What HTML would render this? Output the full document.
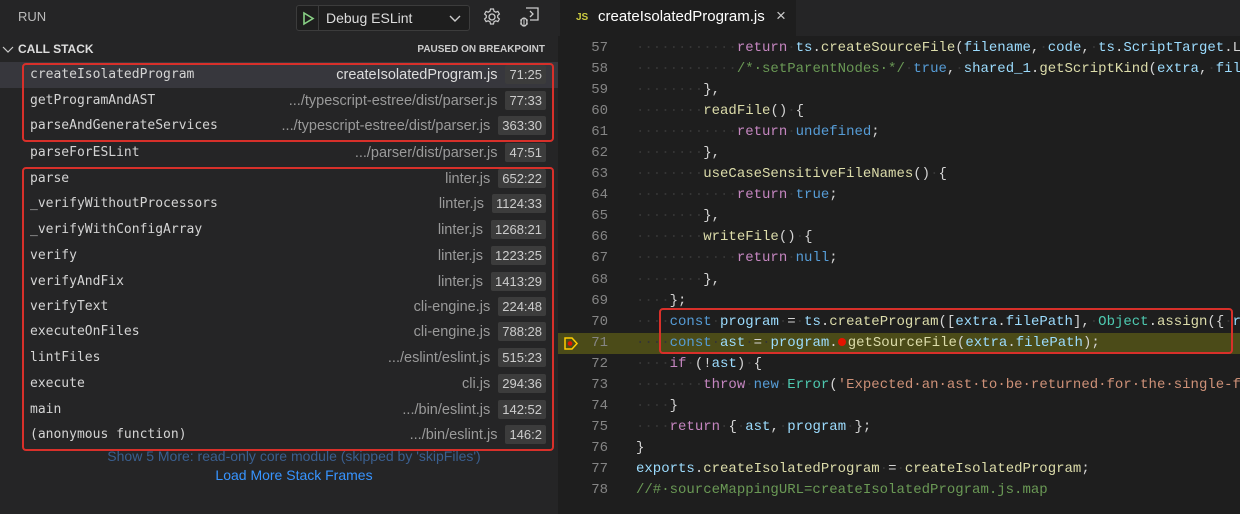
<!DOCTYPE html>
<html><head><meta charset="utf-8"><style>
*{margin:0;padding:0;box-sizing:border-box}
body{width:1240px;height:514px;overflow:hidden;background:#1e1e1e;font-family:"Liberation Sans",sans-serif;position:relative}
#left{position:absolute;left:0;top:0;width:558px;height:514px;background:#252526}
.run{position:absolute;left:18px;top:9px;color:#bbb;font-size:13px}
.dbg{position:absolute;left:296px;top:5px;width:174px;height:26px;border:1px solid #3c3c3c;border-radius:3px;background:#1e1e1e}
.dbg .sep{position:absolute;left:21px;top:0;width:1px;height:24px;background:#3c3c3c}
.dbg .t{position:absolute;left:29px;top:4px;color:#ddd;font-size:14px}
.cs{position:absolute;left:18px;top:42px;color:#ddd;font-size:12px;font-weight:bold}
.pb{position:absolute;right:13px;top:44px;color:#ccc;font-size:10px;font-weight:bold}
.row{position:absolute;left:0;width:558px;height:25.6px}
.row.sel{background:#37373d}
.row .fn{position:absolute;left:30px;top:5px;font-family:"DejaVu Sans Mono","Liberation Mono",monospace;font-size:13px;color:#d4d4d4}
.row .r{position:absolute;right:12px;top:3px;display:flex;align-items:center;gap:8px}
.row .file{font-size:14.5px;color:#9a9a9a}
.row .ln{background:#3c3c3c;color:#ccc;font-size:13px;padding:2px 4px;border-radius:2px}
.sel .file{color:#ddd}
.box{position:absolute;border:2px solid #d8302a;border-radius:4px}
.more{position:absolute;left:0;width:588px;text-align:center;font-size:14px}
#tabs{position:absolute;left:558px;top:0;width:682px;height:36px;background:#252526}
.tab{position:absolute;left:2px;top:0;width:236px;height:36px;background:#1e1e1e;color:#fff;font-size:15px}
.code{position:absolute;left:558px;top:38px;width:682px;font-family:"Liberation Mono",monospace;font-size:14px}
.l{height:21.05px;line-height:21px;white-space:pre;position:relative}
.n{display:inline-block;width:50px;text-align:right;color:#858585;margin-right:28px}
.d{color:#353535}.k{color:#c586c0}.b{color:#569cd6}.f{color:#dcdcaa}.v{color:#9cdcfe}.s{color:#ce9178}.c{color:#6a9955}.g{color:#4ec9b0}.p{color:#d4d4d4}
.hl{background:#4b4b18}
</style></head><body>
<div id="left">
<div class="run">RUN</div>
<div class="dbg"><svg style="position:absolute;left:4px;top:5px" width="14" height="15"><path d="M3 2 L12 7.5 L3 13 Z" fill="none" stroke="#89d185" stroke-width="1.6"/></svg><div class="sep"></div><div class="t">Debug ESLint</div><svg style="position:absolute;left:152px;top:9px" width="12" height="8"><path d="M1 1 L6 6 L11 1" fill="none" stroke="#ccc" stroke-width="1.4"/></svg></div>
<svg style="position:absolute;left:482px;top:7px" width="20" height="20" viewBox="0 0 20 20"><circle cx="10" cy="10" r="3" fill="none" stroke="#ccc" stroke-width="1.3"/><path d="M8.5 2h3l.5 2.2 1.8 1 2.1-.8 1.5 2.6-1.7 1.5v2l1.7 1.5-1.5 2.6-2.1-.8-1.8 1-.5 2.2h-3l-.5-2.2-1.8-1-2.1.8-1.5-2.6 1.7-1.5v-2L2.6 7l1.5-2.6 2.1.8 1.8-1z" fill="none" stroke="#ccc" stroke-width="1.2"/></svg>
<svg style="position:absolute;left:518px;top:6px" width="22" height="22" viewBox="0 0 22 22"><path d="M8 2h12v12h-8" fill="none" stroke="#ccc" stroke-width="1.3"/><path d="M12 5l3 3-3 3" fill="none" stroke="#ccc" stroke-width="1.3"/><ellipse cx="6" cy="16" rx="3" ry="4" fill="none" stroke="#ccc" stroke-width="1.3"/><path d="M2 14h2M2 18h2M8 14h2M8 18h2M6 12v8" stroke="#ccc" stroke-width="1"/></svg>
<svg style="position:absolute;left:2px;top:45px" width="12" height="10"><path d="M1 2 L6 7 L11 2" fill="none" stroke="#ccc" stroke-width="1.2"/></svg>
<div class="cs">CALL STACK</div>
<div class="pb">PAUSED ON BREAKPOINT</div>

<div class="row sel" style="top:62px"><span class="fn">createIsolatedProgram</span><span class="r"><span class="file">createIsolatedProgram.js</span><span class="ln">71:25</span></span></div>
<div class="row" style="top:88px"><span class="fn">getProgramAndAST</span><span class="r"><span class="file">.../typescript-estree/dist/parser.js</span><span class="ln">77:33</span></span></div>
<div class="row" style="top:113px"><span class="fn">parseAndGenerateServices</span><span class="r"><span class="file">.../typescript-estree/dist/parser.js</span><span class="ln">363:30</span></span></div>
<div class="row" style="top:140px"><span class="fn">parseForESLint</span><span class="r"><span class="file">.../parser/dist/parser.js</span><span class="ln">47:51</span></span></div>
<div class="row" style="top:166px"><span class="fn">parse</span><span class="r"><span class="file">linter.js</span><span class="ln">652:22</span></span></div>
<div class="row" style="top:191px"><span class="fn">_verifyWithoutProcessors</span><span class="r"><span class="file">linter.js</span><span class="ln">1124:33</span></span></div>
<div class="row" style="top:217px"><span class="fn">_verifyWithConfigArray</span><span class="r"><span class="file">linter.js</span><span class="ln">1268:21</span></span></div>
<div class="row" style="top:243px"><span class="fn">verify</span><span class="r"><span class="file">linter.js</span><span class="ln">1223:25</span></span></div>
<div class="row" style="top:269px"><span class="fn">verifyAndFix</span><span class="r"><span class="file">linter.js</span><span class="ln">1413:29</span></span></div>
<div class="row" style="top:294px"><span class="fn">verifyText</span><span class="r"><span class="file">cli-engine.js</span><span class="ln">224:48</span></span></div>
<div class="row" style="top:319px"><span class="fn">executeOnFiles</span><span class="r"><span class="file">cli-engine.js</span><span class="ln">788:28</span></span></div>
<div class="row" style="top:345px"><span class="fn">lintFiles</span><span class="r"><span class="file">.../eslint/eslint.js</span><span class="ln">515:23</span></span></div>
<div class="row" style="top:371px"><span class="fn">execute</span><span class="r"><span class="file">cli.js</span><span class="ln">294:36</span></span></div>
<div class="row" style="top:397px"><span class="fn">main</span><span class="r"><span class="file">.../bin/eslint.js</span><span class="ln">142:52</span></span></div>
<div class="row" style="top:422px"><span class="fn">(anonymous function)</span><span class="r"><span class="file">.../bin/eslint.js</span><span class="ln">146:2</span></span></div>
<div class="box" style="left:22px;top:63px;width:532px;height:79px"></div>
<div class="box" style="left:22px;top:167px;width:532px;height:284px"></div>
<div class="more" style="top:448px;color:#3a5f8f">Show 5 More: read-only core module (skipped by 'skipFiles')</div>
<div class="more" style="top:467px;color:#3794ff">Load More Stack Frames</div>
</div>

<div id="tabs"><div class="tab"><span style="position:absolute;left:16px;top:12px;font-size:10px;color:#cbcb41;font-weight:bold">JS</span><span style="position:absolute;left:38px;top:8px">createIsolatedProgram.js</span><span style="position:absolute;left:216px;top:6px;font-size:17px;color:#ccc">×</span></div></div>

<div class="code">
<div class="l"><span class="n">57</span><span class="d">············</span><span class="k">return</span><span class="d">·</span><span class="v">ts</span><span class="p">.</span><span class="f">createSourceFile</span><span class="p">(</span><span class="v">filename</span><span class="p">,</span><span class="d">·</span><span class="v">code</span><span class="p">,</span><span class="d">·</span><span class="v">ts</span><span class="p">.</span><span class="v">ScriptTarget</span><span class="p">.L</span></div>
<div class="l"><span class="n">58</span><span class="d">············</span><span class="c">/*·setParentNodes·*/</span><span class="d">·</span><span class="b">true</span><span class="p">,</span><span class="d">·</span><span class="v">shared_1</span><span class="p">.</span><span class="f">getScriptKind</span><span class="p">(</span><span class="v">extra</span><span class="p">,</span><span class="d">·</span><span class="v">fil</span></div>
<div class="l"><span class="n">59</span><span class="d">········</span><span class="p">},</span></div>
<div class="l"><span class="n">60</span><span class="d">········</span><span class="f">readFile</span><span class="p">()</span><span class="d">·</span><span class="p">{</span></div>
<div class="l"><span class="n">61</span><span class="d">············</span><span class="k">return</span><span class="d">·</span><span class="b">undefined</span><span class="p">;</span></div>
<div class="l"><span class="n">62</span><span class="d">········</span><span class="p">},</span></div>
<div class="l"><span class="n">63</span><span class="d">········</span><span class="f">useCaseSensitiveFileNames</span><span class="p">()</span><span class="d">·</span><span class="p">{</span></div>
<div class="l"><span class="n">64</span><span class="d">············</span><span class="k">return</span><span class="d">·</span><span class="b">true</span><span class="p">;</span></div>
<div class="l"><span class="n">65</span><span class="d">········</span><span class="p">},</span></div>
<div class="l"><span class="n">66</span><span class="d">········</span><span class="f">writeFile</span><span class="p">()</span><span class="d">·</span><span class="p">{</span></div>
<div class="l"><span class="n">67</span><span class="d">············</span><span class="k">return</span><span class="d">·</span><span class="b">null</span><span class="p">;</span></div>
<div class="l"><span class="n">68</span><span class="d">········</span><span class="p">},</span></div>
<div class="l"><span class="n">69</span><span class="d">····</span><span class="p">};</span></div>
<div class="l"><span class="n">70</span><span class="d">····</span><span class="b">const</span><span class="d">·</span><span class="v">program</span><span class="d">·</span><span class="p">=</span><span class="d">·</span><span class="v">ts</span><span class="p">.</span><span class="f">createProgram</span><span class="p">([</span><span class="v">extra</span><span class="p">.</span><span class="v">filePath</span><span class="p">],</span><span class="d">·</span><span class="g">Object</span><span class="p">.</span><span class="f">assign</span><span class="p">({</span><span class="d">·</span><span class="v">r</span></div>
<div class="l hl"><span class="n">71</span><span class="d">····</span><span class="b">const</span><span class="d">·</span><span class="v">ast</span><span class="d">·</span><span class="p">=</span><span class="d">·</span><span class="v">program</span><span class="p">.</span><span style="display:inline-block;width:8px;height:8px;border-radius:4px;background:#e51400;margin:0 2px 0 0"></span><span class="f">getSourceFile</span><span class="p">(</span><span class="v">extra</span><span class="p">.</span><span class="v">filePath</span><span class="p">);</span><svg style="position:absolute;left:5px;top:3px" width="16" height="15"><path d="M2 2h7l5 5.5-5 5.5H2z" fill="none" stroke="#ffcc00" stroke-width="1.5"/><circle cx="7" cy="7.5" r="2.3" fill="#e51400"/></svg></div>
<div class="l"><span class="n">72</span><span class="d">····</span><span class="k">if</span><span class="d">·</span><span class="p">(!</span><span class="v">ast</span><span class="p">)</span><span class="d">·</span><span class="p">{</span></div>
<div class="l"><span class="n">73</span><span class="d">········</span><span class="k">throw</span><span class="d">·</span><span class="b">new</span><span class="d">·</span><span class="g">Error</span><span class="p">(</span><span class="s">'Expected·an·ast·to·be·returned·for·the·single-f</span></div>
<div class="l"><span class="n">74</span><span class="d">····</span><span class="p">}</span></div>
<div class="l"><span class="n">75</span><span class="d">····</span><span class="k">return</span><span class="d">·</span><span class="p">{</span><span class="d">·</span><span class="v">ast</span><span class="p">,</span><span class="d">·</span><span class="v">program</span><span class="d">·</span><span class="p">};</span></div>
<div class="l"><span class="n">76</span><span class="p">}</span></div>
<div class="l"><span class="n">77</span><span class="v">exports</span><span class="p">.</span><span class="f">createIsolatedProgram</span><span class="d">·</span><span class="p">=</span><span class="d">·</span><span class="f">createIsolatedProgram</span><span class="p">;</span></div>
<div class="l"><span class="n">78</span><span class="c">//#·sourceMappingURL=createIsolatedProgram.js.map</span></div>
</div>
<div class="box" style="left:659px;top:308px;width:574px;height:46px"></div>
</body></html>
